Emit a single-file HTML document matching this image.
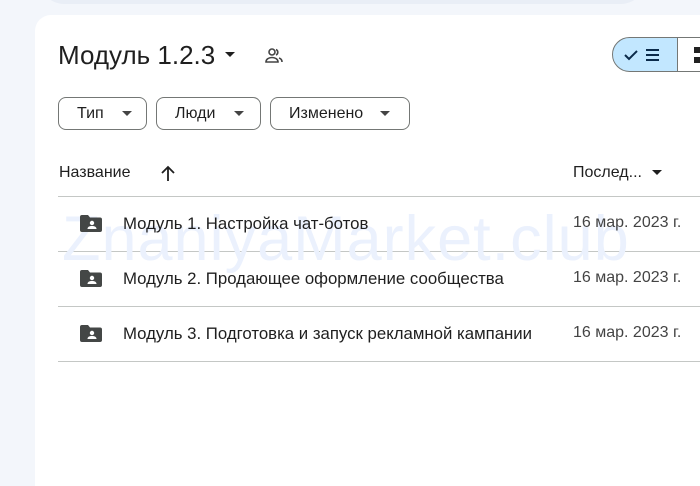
<!DOCTYPE html>
<html><head><meta charset="utf-8"><style>
html,body{margin:0;width:700px;height:486px;overflow:hidden}
body{background:#f3f6fb;font-family:"Liberation Sans",sans-serif;position:relative;color:#1f1f1f}
.top{position:absolute;left:40px;top:-20px;width:605px;height:24px;background:#e9eef6;border-radius:0 0 24px 24px}
.card{position:absolute;left:35px;top:15px;width:700px;height:480px;background:#fff;border-radius:16px 0 0 0}
.a{position:absolute}
.t{font-size:26px;left:58px;top:40px}
.chip{position:absolute;top:97px;height:33px;border:1px solid #747775;border-radius:8px;box-sizing:border-box;font-size:16px;line-height:31px;padding-left:18px;color:#1f1f1f}
.tri{display:inline-block;border-left:5px solid transparent;border-right:5px solid transparent;border-top:5px solid #444;vertical-align:middle}
.line{position:absolute;left:58px;width:650px;height:1px;background:#c4c7c5}
.row{position:absolute;left:58px;font-size:16.8px}
.date{position:absolute;left:573px;font-size:16px;color:#444}
.wm{position:absolute;left:62px;top:203px;font-size:63px;color:#ebf1fd;letter-spacing:1px}
</style></head><body>
<div class="top"></div>
<div class="card"></div>
<div class="a t">Модуль 1.2.3</div>
<div class="a" style="left:225px;top:46px"><span class="tri" style="border-top-color:#1f1f1f"></span></div>
<svg class="a" style="left:264px;top:47px" width="20" height="18" viewBox="0 0 20 18"><circle cx="8" cy="5" r="3" fill="none" stroke="#444" stroke-width="1.6"/><path d="M2 15c0-3 3-4.5 6-4.5s6 1.5 6 4.5z" fill="none" stroke="#444" stroke-width="1.6"/><path d="M12 2.5a3 3 0 010 5.5M15 11c2 .6 3 2 3 4" fill="none" stroke="#444" stroke-width="1.6"/></svg>
<div class="a" style="left:612px;top:37px;width:66px;height:35px;border:1px solid #747775;border-radius:18px 0 0 18px;background:#c2e7ff;box-sizing:border-box"></div>
<div class="a" style="left:677px;top:37px;width:30px;height:35px;border:1px solid #747775;background:#fff;box-sizing:border-box"></div>
<svg class="a" style="left:622px;top:45px" width="44" height="20"><path d="M3 10l4 4 8-8" fill="none" stroke="#0b2a4a" stroke-width="2"/><path d="M24 5h13M24 10h13M24 15h13" stroke="#0b2a4a" stroke-width="2"/></svg>
<div class="a" style="left:694px;top:47px;width:6px;height:6px;background:#222"></div>
<div class="a" style="left:694px;top:57px;width:6px;height:6px;background:#222"></div>
<div class="chip" style="left:58px;width:89px">Тип <span class="tri" style="margin-left:14px"></span></div>
<div class="chip" style="left:156px;width:105px">Люди <span class="tri" style="margin-left:14px"></span></div>
<div class="chip" style="left:270px;width:140px">Изменено <span class="tri" style="margin-left:12px"></span></div>
<div class="row" style="top:164px;left:59px;font-size:16px">Название</div>
<svg class="a" style="left:160px;top:165px" width="16" height="17"><path d="M8 16V2M2 8l6-6 6 6" fill="none" stroke="#1f1f1f" stroke-width="1.8"/></svg>
<div class="a" style="left:573px;top:164px;font-size:16px">Послед... <span class="tri" style="margin-left:6px;border-top-color:#1f1f1f"></span></div>
<div class="line" style="top:196px"></div>
<div class="line" style="top:251px"></div>
<div class="line" style="top:306px"></div>
<div class="line" style="top:361px"></div>
<div class="wm">ZnaniyaMarket.club</div>
<svg width="0" height="0" style="position:absolute"><defs><g id="f"><path d="M0 2a2 2 0 012-2h6l2 2.5h10a2 2 0 012 2V15a2 2 0 01-2 2H2a2 2 0 01-2-2z" fill="#444746"/><circle cx="12" cy="8" r="2.2" fill="#fff"/><path d="M7.5 14c0-2.2 2-3 4.5-3s4.5.8 4.5 3z" fill="#fff"/></g></defs></svg>
<svg class="a" style="left:80px;top:215px" width="22" height="18"><use href="#f"/></svg>
<svg class="a" style="left:80px;top:270px" width="22" height="18"><use href="#f"/></svg>
<svg class="a" style="left:80px;top:325px" width="22" height="18"><use href="#f"/></svg>
<div class="row" style="left:123px;top:214px">Модуль 1. Настройка чат-ботов</div>
<div class="row" style="left:123px;top:269px">Модуль 2. Продающее оформление сообщества</div>
<div class="row" style="left:123px;top:324px">Модуль 3. Подготовка и запуск рекламной кампании</div>
<div class="date" style="top:214px">16 мар. 2023 г.</div>
<div class="date" style="top:269px">16 мар. 2023 г.</div>
<div class="date" style="top:324px">16 мар. 2023 г.</div>
</body></html>
